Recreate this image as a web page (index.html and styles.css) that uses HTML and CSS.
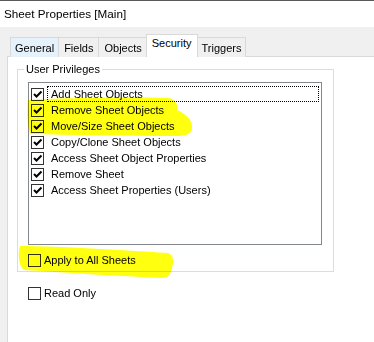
FILE: index.html
```html
<!DOCTYPE html>
<html lang="en">
<head>
    <meta charset="UTF-8">
    <title>Sheet Properties [Main]</title>
    <link rel="stylesheet" href="styles.css">
</head>
<body>
    <div class="titlebar">Sheet Properties [Main]</div>
    <div class="dialog">
        <div class="tabs">
            <div class="tab hover">General</div>
            <div class="tab">Fields</div>
            <div class="tab">Objects</div>
            <div class="tab active">Security</div>
            <div class="tab">Triggers</div>
        </div>
        <div class="panel">
            <fieldset class="group">
                <legend>User Privileges</legend>
                <div class="list">
                    <div class="item"><span class="box checked"></span><span class="label focus">Add Sheet Objects</span></div>
                    <div class="item"><span class="box checked"></span><span class="label">Remove Sheet Objects</span></div>
                    <div class="item"><span class="box checked"></span><span class="label">Move/Size Sheet Objects</span></div>
                    <div class="item"><span class="box checked"></span><span class="label">Copy/Clone Sheet Objects</span></div>
                    <div class="item"><span class="box checked"></span><span class="label">Access Sheet Object Properties</span></div>
                    <div class="item"><span class="box checked"></span><span class="label">Remove Sheet</span></div>
                    <div class="item"><span class="box checked"></span><span class="label">Access Sheet Properties (Users)</span></div>
                </div>
                <div class="option apply"><span class="box"></span><span class="text">Apply to All Sheets</span></div>
            </fieldset>
            <div class="option readonly"><span class="box"></span><span class="text">Read Only</span></div>
        </div>
    </div>

    <!-- highlighter marks drawn over the dialog -->
    <svg class="marker" width="374" height="342" viewBox="0 0 374 342">
        <path d="M28 100 C60 98 120 97 168 98 C176 99 178 104 177 110 C186 114 193 120 192 129 C191 135 184 136 176 136 C120 136 70 135 30 134 C27 124 27 110 28 100 Z"/>
        <path d="M20 246 C60 246 120 250 168 253 C174 255 174 262 172 268 C171 274 168 278 162 278 C120 276 70 273 24 270 C18 266 18 252 20 246 Z"/>
    </svg>
</body>
</html>
```

FILE: styles.css
```css
* {
    box-sizing: border-box;
}

body {
    margin: 0;
    width: 374px;
    height: 342px;
    overflow: hidden;
    font-family: "Liberation Sans", Arial, sans-serif;
    font-size: 11px;
    color: #000;
    background-color: #f0f0f0;
}

/* Title bar */
.titlebar {
    height: 27px;
    padding: 6px 0 0 4px;
    background-color: #fff;
    border-top: 1px solid #5a5a5a;
    font-size: 11.7px;
}

.dialog {
    padding: 8px 0 0 7px;
}

/* Tabs */
.tabs {
    display: flex;
    align-items: flex-end;
    padding-left: 3px;
    height: 22px;
}

.tab {
    height: 20px;
    padding: 4px 5px 0 5px;
    margin-right: -1px;
    background-color: #f0f0f0;
    border: 1px solid #d9d9d9;
    border-bottom: none;
}

.tab.hover {
    background-color: #e5f1fb;
    padding: 4px 4px 0 4px;
}

.tab.active {
    position: relative;
    z-index: 1;
    height: 23px;
    margin: 0 -1px 0 -1px;
    padding: 2px 5px 0 5px;
    background-color: #fff;
}

.tab:last-child {
    padding: 4px 4px 0 4px;
}

/* Tab page */
.panel {
    height: 300px;
    margin-top: -1px;
    padding: 0 0 0 9px;
    background-color: #fff;
    border: 1px solid #d9d9d9;
    border-right: none;
}

.group {
    width: 317px;
    margin: 4px 0 0 0;
    padding: 0 0 3px 0;
    border: 1px solid #dcdcdc;
}

.group legend {
    margin-left: 6px;
    padding: 0 2px;
    line-height: 16px;
}

/* Privileges list */
.list {
    width: 294px;
    height: 163px;
    margin: 5px 0 0 10px;
    padding: 3px 2px 0 2px;
    border: 1px solid #828790;
}

.item {
    display: flex;
    align-items: center;
    height: 16px;
}

.label {
    flex: 1;
    margin-left: 3px;
    padding: 0 0 0 3px;
    line-height: 14px;
    border: 1px solid transparent;
}

.label.focus {
    border: 1px dotted #000;
}

/* Check boxes */
.box {
    width: 13px;
    height: 13px;
    flex-shrink: 0;
    border: 1px solid #333;
    background-color: #fff;
}

.box.checked {
    background-image: url("data:image/svg+xml;utf8,<svg xmlns='http://www.w3.org/2000/svg' width='11' height='11'><path d='M2 5 L4.5 7.5 L9.5 2.5' fill='none' stroke='black' stroke-width='2'/></svg>");
    background-repeat: no-repeat;
}

.option {
    display: flex;
    align-items: center;
    height: 16px;
}

.option .text {
    margin-left: 3px;
}

.apply {
    margin: 7px 0 0 10px;
}

.readonly {
    margin: 13px 0 0 11px;
}

/* Yellow highlighter */
.marker {
    position: absolute;
    left: 0;
    top: 0;
    fill: #ffff10;
    mix-blend-mode: multiply;
    pointer-events: none;
}
```
